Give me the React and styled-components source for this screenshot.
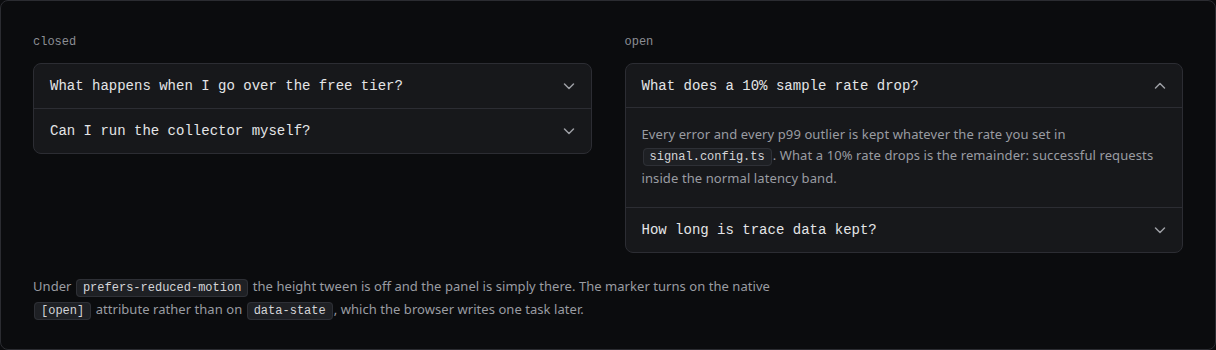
import styled, { createGlobalStyle } from "styled-components"
import { useState } from "react"

const GlobalStyle = createGlobalStyle`
    html, body { margin: 0; padding: 0; background: #0b0c0e; }
    * { box-sizing: border-box; }
`

const mono = `"Liberation Mono", "DejaVu Sans Mono", monospace`
const sans = `"Noto Sans", Roboto, sans-serif`

const Frame = styled.div`
    width: 1216px;
    height: 350px;
    border: 1px solid #2b2c31;
    border-radius: 8px;
    background: #0b0c0e;
    padding: 33px 32px 0 32px;
    font-family: ${sans};
`

const Columns = styled.div`
    display: grid;
    grid-template-columns: 1fr 1fr;
    column-gap: 33px;
    align-items: start;
`

const Column = styled.div`
    display: flex;
    flex-direction: column;
    gap: 12px;
`

const Label = styled.div`
    font-family: ${mono};
    font-size: 12px;
    line-height: 17px;
    color: #8c8e94;
`

const Accordion = styled.div`
    border: 1px solid #2c2d33;
    border-radius: 8px;
    background: #17181b;
    overflow: hidden;
`

const Item = styled.div`
    & + & { border-top: 1px solid #2c2d33; }
`

const Trigger = styled.button`
    display: flex;
    align-items: center;
    justify-content: space-between;
    width: 100%;
    height: 44px;
    padding: 0 16px;
    background: none;
    border: 0;
    border-bottom: ${p => p.$open ? "1px solid #2c2d33" : "0"};
    font-family: ${mono};
    font-size: 14px;
    color: #e4e5e7;
    text-align: left;
    cursor: pointer;
`

const Chevron = styled.svg`
    width: 12px;
    height: 12px;
    flex-shrink: 0;
    color: #9c9ea4;
    transform: ${p => p.$open ? "rotate(180deg)" : "none"};
`

const Panel = styled.div`
    padding: 16px 16px 18px 16px;
    font-size: 13px;
    line-height: 21px;
    letter-spacing: 0.1px;
    color: #9a9ca2;
`

const Code = styled.code`
    font-family: ${mono};
    font-size: 12px;
    letter-spacing: 0;
    padding: 1px 6px;
    margin: 0 1px;
    color: #d4d5d8;
    background: #1e2024;
    border: 1px solid #2e3036;
    border-radius: 4px;
`

const Note = styled.p`
    margin: 23px 0 0 0;
    max-width: 760px;
    font-size: 13px;
    line-height: 21px;
    letter-spacing: 0.05px;
    color: #9a9ca2;
`

function FaqItem({ question, children, defaultOpen }) {
    const [open, setOpen] = useState(!!defaultOpen)
    return <Item>
        <Trigger $open={open} onClick={() => setOpen(!open)}>
            {question}
            <Chevron $open={open} viewBox="0 0 12 12" fill="none" stroke="currentColor"
                strokeWidth="1.5" strokeLinecap="round" strokeLinejoin="round">
                <path d="M1.5 4 L6 8.5 L10.5 4" />
            </Chevron>
        </Trigger>
        {open && <Panel>{children}</Panel>}
    </Item>
}

export default function App() {
    return <>
        <GlobalStyle />
        <Frame>
            <Columns>
                <Column>
                    <Label>closed</Label>
                    <Accordion>
                        <FaqItem question="What happens when I go over the free tier?">
                            Usage past the free tier is billed per million events.
                        </FaqItem>
                        <FaqItem question="Can I run the collector myself?">
                            Yes, the collector is open source.
                        </FaqItem>
                    </Accordion>
                </Column>
                <Column>
                    <Label>open</Label>
                    <Accordion>
                        <FaqItem question="What does a 10% sample rate drop?" defaultOpen>
                            Every error and every p99 outlier is kept whatever the rate you set in{" "}
                            <Code>signal.config.ts</Code>. What a 10% rate drops is the remainder: successful requests inside the normal latency band.
                        </FaqItem>
                        <FaqItem question="How long is trace data kept?">
                            Thirty days on every plan.
                        </FaqItem>
                    </Accordion>
                </Column>
            </Columns>
            <Note>
                Under <Code>prefers-reduced-motion</Code> the height tween is off and the panel is simply there. The marker turns on the native{" "}
                <Code>[open]</Code> attribute rather than on <Code>data-state</Code>, which the browser writes one task later.
            </Note>
        </Frame>
    </>
}
